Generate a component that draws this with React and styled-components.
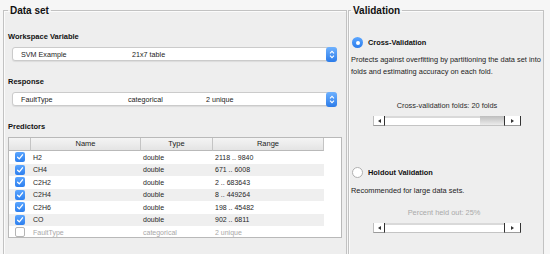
import React from 'react';
import styled, { createGlobalStyle } from 'styled-components';

const Global = createGlobalStyle`
  html, body { margin: 0; padding: 0; background: #f6f6f6; }
  body { font-family: "Liberation Sans", Arial, Helvetica, sans-serif; color: #1a1a1a; }
  #root { width: 550px; height: 254px; overflow: hidden; }
`;

const Page = styled.div`
  width: 550px;
  height: 254px;
  box-sizing: border-box;
  overflow: hidden;
  display: flex;
  align-items: flex-start;
  gap: 1px;
  padding: 4px 0 0 3px;
`;

const Group = styled.fieldset`
  margin: 0;
  min-width: 0;
  box-sizing: border-box;
  width: ${(p) => p.$w}px;
  height: 290px;
  padding: 0 0 0 ${(p) => p.$pl}px;
  border: 1px solid #c2c2c2;
  box-shadow: inset 1px 1px 0 #fbfbfb;
  background: #eeeeee;
  display: flex;
  flex-direction: column;
  align-items: flex-start;
`;

const Legend = styled.legend`
  font-size: 10px;
  font-weight: bold;
  line-height: 13px;
  padding: 0 2px;
  color: #111;
`;

const SectionLabel = styled.div`
  font-size: 7.5px;
  font-weight: bold;
  line-height: 10px;
  margin-top: ${(p) => p.$mt}px;
  color: #111;
`;

const Select = styled.div`
  margin: 5px 0 0 4px;
  width: 325px;
  height: 14px;
  box-sizing: border-box;
  background: #fff;
  border: 1px solid #cbcbcb;
  border-radius: 3px;
  box-shadow: 0 1px 1px rgba(0, 0, 0, 0.08);
  display: flex;
  align-items: center;
  padding-left: 8px;
  font-size: 7.2px;
  color: #222;
`;

const SelectCell = styled.span`
  width: ${(p) => (p.$w ? `${p.$w}px` : 'auto')};
  flex: ${(p) => (p.$w ? 'none' : '1')};
  white-space: nowrap;
`;

const Stepper = styled.div`
  width: 11px;
  height: 15px;
  margin-right: -1px;
  border-radius: 3px;
  background: linear-gradient(#6fb2ff, #2b7be9);
  display: flex;
  align-items: center;
  justify-content: center;
  flex: none;
`;

const StepperIcon = () => (
  <svg width="6" height="9" viewBox="0 0 6 9">
    <path d="M1 3.3 L3 1.3 L5 3.3 M1 5.7 L3 7.7 L5 5.7" fill="none" stroke="#fff" strokeWidth="1.1" />
  </svg>
);

const TableBox = styled.div`
  margin-top: 5px;
  width: 334px;
  height: 101px;
  box-sizing: border-box;
  background: #fff;
  border: 1px solid #b9b9b9;
  overflow: hidden;
`;

const Grid = styled.div`
  width: 315px;
  display: grid;
  grid-template-columns: 22px 110px 72px 111px;
`;

const HeadCell = styled.div`
  height: 13px;
  box-sizing: border-box;
  background: linear-gradient(#f4f4f4, #e4e4e4);
  border-right: 1px solid #c4c4c4;
  border-bottom: 1px solid #b9b9b9;
  font-size: 7.5px;
  line-height: 12px;
  text-align: center;
  color: #222;
`;

const Cell = styled.div`
  height: 12.5px;
  display: flex;
  align-items: center;
  justify-content: ${(p) => (p.$center ? 'center' : 'flex-start')};
  padding-left: ${(p) => (p.$center ? 0 : 2)}px;
  background: ${(p) => (p.$odd ? '#efefef' : '#ffffff')};
  font-size: 7px;
  color: ${(p) => (p.$dim ? '#a8a8a8' : '#262626')};
  white-space: nowrap;
`;

const Check = styled.div`
  width: 10px;
  height: 10px;
  box-sizing: border-box;
  border-radius: 2px;
  background: ${(p) => (p.$on ? 'linear-gradient(#5aa5ff, #2d7fee)' : '#fff')};
  border: ${(p) => (p.$on ? 'none' : '1px solid #b5b5b5')};
  display: flex;
  align-items: center;
  justify-content: center;
`;

const CheckMark = () => (
  <svg width="8" height="8" viewBox="0 0 8 8">
    <path d="M1.6 4.2 L3.3 5.9 L6.5 1.8" fill="none" stroke="#fff" strokeWidth="1.3" strokeLinecap="round" strokeLinejoin="round" />
  </svg>
);

const RadioRow = styled.div`
  display: flex;
  align-items: center;
  gap: 5px;
  margin: ${(p) => p.$mt}px 0 0 1px;
  font-size: 7.4px;
  font-weight: bold;
  line-height: 11px;
  color: #111;
`;

const Radio = styled.div`
  width: 11px;
  height: 11px;
  box-sizing: border-box;
  border-radius: 50%;
  background: ${(p) => (p.$on ? 'linear-gradient(#5ca7ff, #2b7cec)' : '#fff')};
  border: ${(p) => (p.$on ? 'none' : '1px solid #b0b0b0')};
  display: flex;
  align-items: center;
  justify-content: center;
  &::after {
    content: '';
    width: 4px;
    height: 4px;
    border-radius: 50%;
    background: ${(p) => (p.$on ? '#fff' : 'transparent')};
  }
`;

const Desc = styled.div`
  margin-top: ${(p) => p.$mt}px;
  font-size: 7.4px;
  line-height: 12px;
  color: #222;
`;

const CenterLabel = styled.div`
  align-self: stretch;
  text-align: center;
  margin-top: ${(p) => p.$mt}px;
  padding-right: ${(p) => p.$pr || 0}px;
  font-size: 7.4px;
  line-height: 12px;
  color: ${(p) => (p.$dim ? '#a9a9a9' : '#2a2a2a')};
`;

const Scroll = styled.div`
  margin: 4px 0 0 22px;
  width: 148px;
  height: 10px;
  display: flex;
`;

const ArrowBtn = styled.div`
  width: ${(p) => p.$w}px;
  box-sizing: border-box;
  background: #fff;
  display: flex;
  align-items: center;
  justify-content: center;
  border-bottom: 1px solid #9a9a9a;
  border-left: 1px solid ${(p) => (p.$side === 'left' ? '#bdbdbd' : '#333')};
  border-right: 1px solid #333;
`;

const Track = styled.div`
  flex: 1;
  position: relative;
  box-sizing: border-box;
  background: #fff;
  border-top: 2px solid #d9d9d9;
  border-bottom: 1px solid #c4c4c4;
`;

const Thumb = styled.div`
  position: absolute;
  top: -2px;
  bottom: 0;
  right: 0;
  width: 24px;
  background: linear-gradient(#bdbdbd, #ececec);
`;

const Arrow = ({ dir }) => (
  <svg width="3" height="4" viewBox="0 0 3 4">
    <path d={dir === 'left' ? 'M3 0 L0 2 L3 4 Z' : 'M0 0 L3 2 L0 4 Z'} fill="#333" />
  </svg>
);

const ScrollBar = ({ thumb }) => (
  <Scroll>
    <ArrowBtn $w={12} $side="left"><Arrow dir="left" /></ArrowBtn>
    <Track>{thumb && <Thumb />}</Track>
    <ArrowBtn $w={17} $side="right"><Arrow dir="right" /></ArrowBtn>
  </Scroll>
);

const rows = [
  { name: 'H2', type: 'double', range: '2118 .. 9840', on: true },
  { name: 'CH4', type: 'double', range: '671 .. 6008', on: true },
  { name: 'C2H2', type: 'double', range: '2 .. 683643', on: true },
  { name: 'C2H4', type: 'double', range: '8 .. 449264', on: true },
  { name: 'C2H6', type: 'double', range: '198 .. 45482', on: true },
  { name: 'CO', type: 'double', range: '902 .. 6811', on: true },
  { name: 'FaultType', type: 'categorical', range: '2 unique', on: false },
];

export default function App() {
  return (
    <>
      <Global />
      <Page>
        <Group $w={344} $pl={4}>
          <Legend>Data set</Legend>
          <SectionLabel $mt={15}>Workspace Variable</SectionLabel>
          <Select>
            <SelectCell $w={111}>SVM Example</SelectCell>
            <SelectCell>21x7 table</SelectCell>
            <Stepper><StepperIcon /></Stepper>
          </Select>
          <SectionLabel $mt={16}>Response</SectionLabel>
          <Select>
            <SelectCell $w={107}>FaultType</SelectCell>
            <SelectCell $w={78}>categorical</SelectCell>
            <SelectCell>2 unique</SelectCell>
            <Stepper><StepperIcon /></Stepper>
          </Select>
          <SectionLabel $mt={16}>Predictors</SectionLabel>
          <TableBox>
            <Grid>
              <HeadCell />
              <HeadCell>Name</HeadCell>
              <HeadCell>Type</HeadCell>
              <HeadCell>Range</HeadCell>
              {rows.map((r, i) => (
                <React.Fragment key={r.name}>
                  <Cell $center $odd={i % 2 === 1}>
                    <Check $on={r.on}>{r.on && <CheckMark />}</Check>
                  </Cell>
                  <Cell $odd={i % 2 === 1} $dim={!r.on}>{r.name}</Cell>
                  <Cell $odd={i % 2 === 1} $dim={!r.on}>{r.type}</Cell>
                  <Cell $odd={i % 2 === 1} $dim={!r.on}>{r.range}</Cell>
                </React.Fragment>
              ))}
            </Grid>
          </TableBox>
        </Group>
        <Group $w={196} $pl={2}>
          <Legend>Validation</Legend>
          <RadioRow $mt={20}>
            <Radio $on />
            Cross-Validation
          </RadioRow>
          <Desc $mt={6}>
            Protects against overfitting by partitioning the data set into
            <br />
            folds and estimating accuracy on each fold.
          </Desc>
          <CenterLabel $mt={22}>Cross-validation folds: 20 folds</CenterLabel>
          <ScrollBar thumb />
          <RadioRow $mt={41}>
            <Radio />
            Holdout Validation
          </RadioRow>
          <Desc $mt={7}>Recommended for large data sets.</Desc>
          <CenterLabel $mt={10} $pr={6} $dim>Percent held out: 25%</CenterLabel>
          <ScrollBar />
        </Group>
      </Page>
    </>
  );
}
